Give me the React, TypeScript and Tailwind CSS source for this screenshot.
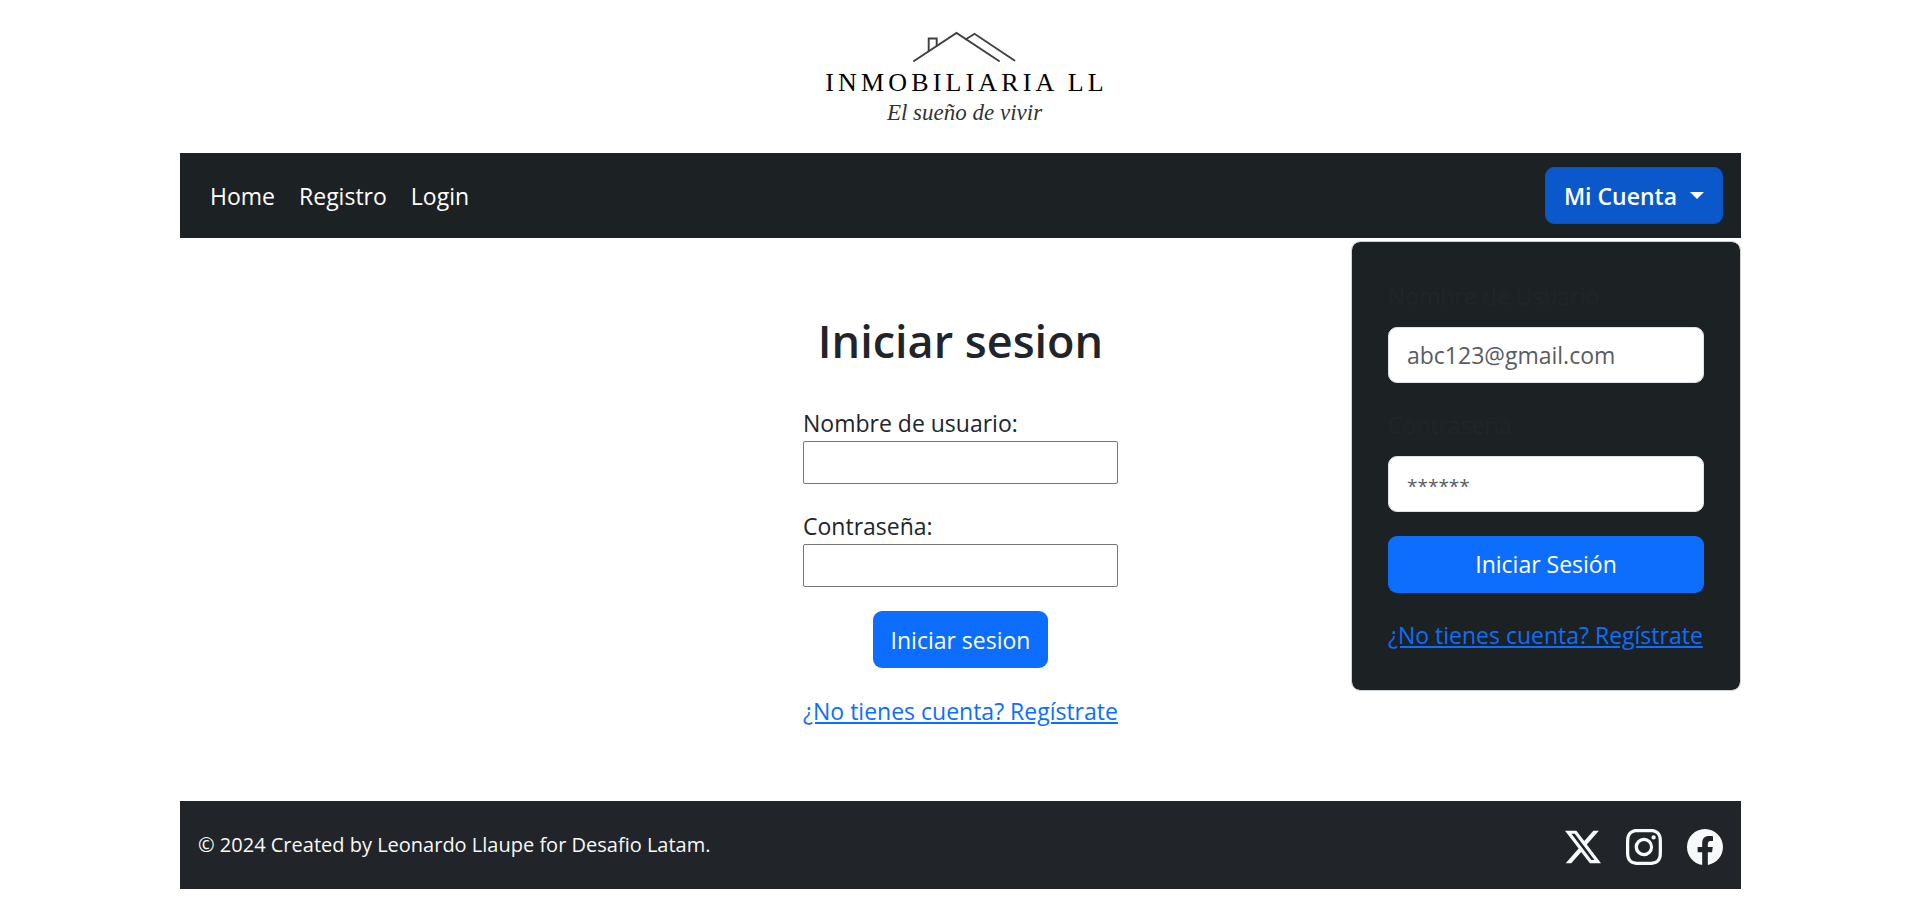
import { BsFacebook, BsInstagram, BsTwitterX } from "react-icons/bs";

function Logo() {
  return (
    <a href="#" className="flex flex-col items-center text-black">
      <svg viewBox="0 0 104 32" className="h-8 w-[104px]" fill="none" stroke="#3f3f41" strokeWidth="1.9" strokeLinecap="round" aria-hidden="true">
        <path d="M1 30 43.500 2 86 30" />
        <path d="M53 8.300 61.500 2.800 101.500 29.500" />
        <path d="M15.700 20V7.500h8v7.300" />
      </svg>
      <span className="mt-1 pl-1 font-['Liberation_Serif',serif] text-[26px] leading-8 tracking-[0.16em]">INMOBILIARIA LL</span>
      <span className="font-['Liberation_Serif',serif] text-[23px] leading-7 text-[#333333] italic">El sueño de vivir</span>
    </a>
  );
}

function NavBar() {
  return (
    <nav className="relative flex items-center justify-between bg-[#1c2124] px-[18px] py-[14px]">
      <ul className="flex text-white">
        <li><a href="#" className="px-3">Home</a></li>
        <li><a href="#" className="px-3">Registro</a></li>
        <li><a href="#" className="px-3">Login</a></li>
      </ul>
      <button type="button" aria-expanded="true" className="flex h-[57px] items-center rounded-[9px] border border-[#0a53be] bg-[#0a58ca] px-[18px] font-semibold text-white">
        Mi Cuenta
        <span className="ml-[13px] border-x-[7px] border-t-[7px] border-x-transparent border-t-white" />
      </button>
      <AccountMenu />
    </nav>
  );
}

function AccountMenu() {
  const field = "mt-3 mb-6 block h-14 w-full rounded-[9px] border border-[#dee2e6] bg-white px-[18px] text-[#212529] placeholder:text-[#595c5f]";
  return (
    <form className="absolute top-full right-0 mt-[3px] w-[390px] rounded-[9px] border border-[#cfd0d1] bg-[#1c2124] bg-clip-padding p-9 leading-[37px] text-[#212529]">
      <label htmlFor="menu-user" className="block">Nombre de Usuario</label>
      <input id="menu-user" type="email" placeholder="abc123@gmail.com" className={field} />
      <label htmlFor="menu-pass" className="block">Contraseña</label>
      <input id="menu-pass" type="password" placeholder="******" className={`${field} placeholder:text-[19px]`} />
      <button type="submit" className="mb-6 block h-[57px] w-full rounded-[9px] bg-[#0d6efd] text-white">Iniciar Sesión</button>
      <a href="#" className="block whitespace-nowrap text-[#0d6efd] underline">¿No tienes cuenta? Regístrate</a>
    </form>
  );
}

function LoginForm() {
  const field = "block h-[43px] w-full rounded-[2px] border border-[#767676] bg-white px-1";
  return (
    <main className="flex flex-col items-center pt-[73px] pb-[72px]">
      <h1 className="mb-[34px] text-[45px] leading-[60px] font-semibold">Iniciar sesion</h1>
      <form className="flex w-[315px] flex-col items-center">
        <div className="mb-6 w-full">
          <label htmlFor="user" className="block">Nombre de usuario:</label>
          <input id="user" type="text" className={field} />
        </div>
        <div className="mb-6 w-full">
          <label htmlFor="pass" className="block">Contraseña:</label>
          <input id="pass" type="password" className={field} />
        </div>
        <button type="submit" className="mb-[25px] h-[57px] rounded-[9px] bg-[#0d6efd] px-[18px] text-white">Iniciar sesion</button>
        <a href="#" className="whitespace-nowrap text-[#0d6efd] underline">¿No tienes cuenta? Regístrate</a>
      </form>
    </main>
  );
}

function Footer() {
  return (
    <footer className="flex h-[88px] items-center justify-between bg-[#212529] px-[18px] text-[#f8f9fa]">
      <p className="text-xl">© 2024 Created by Leonardo Llaupe for Desafio Latam.</p>
      <div className="flex gap-[25px] pt-1">
        <a href="#" aria-label="X"><BsTwitterX className="size-9" /></a>
        <a href="#" aria-label="Instagram"><BsInstagram className="size-9" /></a>
        <a href="#" aria-label="Facebook"><BsFacebook className="size-9" /></a>
      </div>
    </footer>
  );
}

export default function App() {
  return (
    <div className="px-[180px] font-['Open_Sans',sans-serif] text-[23px] leading-9 text-[#212529]">
      <header className="flex h-[153px] justify-center pt-[31px] pl-2">
        <Logo />
      </header>
      <NavBar />
      <LoginForm />
      <Footer />
    </div>
  );
}
